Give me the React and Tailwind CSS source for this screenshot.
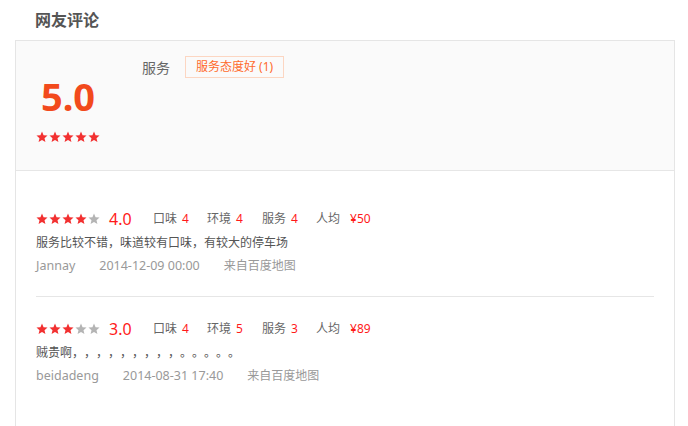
import React from "react";

const FONT = { fontFamily: '"Noto Sans", "Noto Sans CJK SC", sans-serif' };

function Star({ on }) {
  return (
    <svg width="12" height="12" viewBox="0 0 24 24" className="block">
      <path
        d="M12 1.2l3.1 7.4 8 .6-6.1 5.2 1.9 7.8L12 18l-6.9 4.2 1.9-7.8L.9 9.2l8-.6z"
        fill={on ? "#f23030" : "#b4b4b4"}
      />
    </svg>
  );
}

function Stars({ n }) {
  return (
    <div className="flex gap-[1px]">
      {[0, 1, 2, 3, 4].map((i) => (
        <Star key={i} on={i < n} />
      ))}
    </div>
  );
}

function Review({ stars, score, taste, env, service, price, text, user, date, first }) {
  return (
    <div className={first ? "pt-[23px] pb-[20px] border-b border-[#e6e6e6]" : "pt-[22px] pb-[20px]"}>
      <div className="flex items-center h-[20px]">
        <div className="w-[73px] flex items-center">
          <Stars n={stars} />
        </div>
        <div className="w-[44px] text-[16px] text-[#ff1a1a] leading-[20px]">{score}</div>
        <div className="w-[54px] text-[12px] text-[#666]">
          口味<span className="ml-[5px] text-[#ff1a1a]">{taste}</span>
        </div>
        <div className="w-[55px] text-[12px] text-[#666]">
          环境<span className="ml-[5px] text-[#ff1a1a]">{env}</span>
        </div>
        <div className="w-[54px] text-[12px] text-[#666]">
          服务<span className="ml-[5px] text-[#ff1a1a]">{service}</span>
        </div>
        <div className="text-[12px] text-[#666]">
          人均<span className="ml-[10px] text-[#ff1a1a]">{price}</span>
        </div>
      </div>
      <div className="mt-[4px] h-[20px] leading-[20px] text-[12px] text-[#555] [text-spacing-trim:space-all]">
        {text}
      </div>
      <div className="mt-[3px] h-[20px] leading-[20px] text-[12px] text-[#999] flex items-center">
        <span className="mr-[24px] text-[12.5px]">{user}</span>
        <span className="mr-[24px] text-[12.5px]">{date}</span>
        <span>来自百度地图</span>
      </div>
    </div>
  );
}

export default function App() {
  return (
    <div className="w-[688px] h-[426px] bg-white overflow-hidden" style={FONT}>
      <div className="h-[40px] flex items-center pl-[35px] text-[16px] font-bold text-[#555]">
        网友评论
      </div>
      <div className="ml-[15px] w-[660px] h-[400px] border border-[#e5e5e5]">
        <div className="h-[130px] bg-[#fafafa] border-b border-[#e6e6e6] flex pt-[15px] pl-[20px]">
          <div className="w-[64px] flex flex-col items-center mt-[20px]">
            <div className="h-[40px] leading-[40px] text-[38px] font-bold text-[#f24a1c]">5.0</div>
            <div className="mt-[15px]">
              <Stars n={5} />
            </div>
          </div>
          <div className="ml-[42px] flex items-start h-[22px]">
            <div className="h-[22px] leading-[24px] text-[14px] text-[#666]">服务</div>
            <div className="ml-[15px] h-[22px] px-[10px] border border-[#fcd6c2] text-[12px] leading-[20px] text-[#ff6a2c]">
              服务态度好 (1)
            </div>
          </div>
        </div>
        <div className="px-[20px] pt-[15px]">
          <Review
            first
            stars={4}
            score="4.0"
            taste="4"
            env="4"
            service="4"
            price="¥50"
            text="服务比较不错，味道较有口味，有较大的停车场"
            user="Jannay"
            date="2014-12-09 00:00"
          />
          <Review
            stars={3}
            score="3.0"
            taste="4"
            env="5"
            service="3"
            price="¥89"
            text="贼贵啊，，，，，，，，，。。。。。"
            user="beidadeng"
            date="2014-08-31 17:40"
          />
        </div>
      </div>
    </div>
  );
}
